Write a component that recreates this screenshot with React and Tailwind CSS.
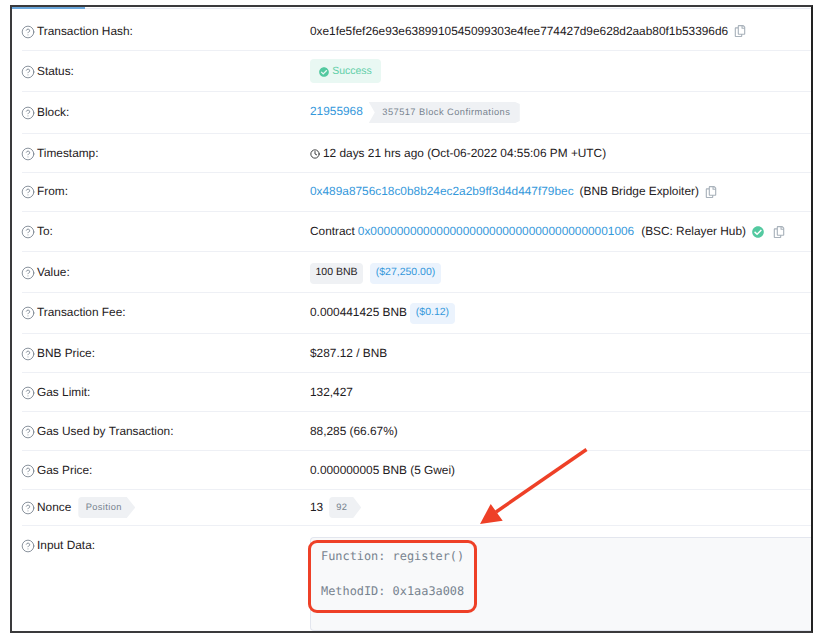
import { CircleHelp, Clock } from 'lucide-react';
import { FaCheckCircle, FaRegCopy } from 'react-icons/fa';

const linkCls = 'text-[#3498db]';

function Row({ label, extra, height, children }) {
  return (
    <div className={`flex items-center border-b border-[#eef0f5] ${height}`}>
      <div className="flex w-[288px] items-center">
        <Help />
        <span>{label}</span>
        {extra}
      </div>
      <div className="flex items-center whitespace-nowrap">{children}</div>
    </div>
  );
}

function Help() {
  return <CircleHelp size={14} strokeWidth={1.4} className="-ml-[1px] mr-[2px] text-[#6f7b87]" />;
}

function CopyIcon({ className }) {
  return <FaRegCopy size={12} className={`text-[#a9b2bb] ${className}`} />;
}

export default function App() {
  return (
    <div className="relative h-[640px] w-[822px] overflow-hidden bg-white font-['Liberation_Sans',sans-serif] text-[11.87px] text-[#1e2022] [text-rendering:geometricPrecision]">
      <div className="ml-[10px] mt-[5px] h-[628px] w-[803px] border-2 border-[#3a3a3c] border-r-[#222]">
        <div className="h-[2px] border-b border-[#e7eaf3]">
          <div className="h-[2px] w-[73px] bg-[#6aa7dc]" />
        </div>
        <div className="ml-[10px]">
          <Row label="Transaction Hash:" height="h-[42px] pt-[4px]">
            <span>0xe1fe5fef26e93e6389910545099303e4fee774427d9e628d2aab80f1b53396d6</span>
            <CopyIcon className="ml-[6px] -mt-[1px]" />
          </Row>
          <Row label="Status:" height="h-[41px] pt-[2px]">
            <span className="-mt-[2px] flex h-[24px] w-[71px] items-center justify-center gap-[3px] rounded-[4px] bg-[#e9f8f3] pt-[1px] text-[10.5px] text-[#63cfa9]">
              <FaCheckCircle size={10} className="text-[#53c9a0]" />
              Success
            </span>
          </Row>
          <Row label="Block:" height="h-[42px]">
            <span className={`-mt-[1px] ${linkCls}`}>21955968</span>
            <span className="ml-[6px] flex h-[21px] w-[151px] items-center justify-center bg-[#eff1f4] pl-[4px] text-[9.3px] tracking-[0.45px] text-[#77838f] [clip-path:polygon(0_0,97%_0,100%_10%,100%_90%,97%_100%,0_100%,6px_50%)]">
              357517 Block Confirmations
            </span>
          </Row>
          <Row label="Timestamp:" height="h-[39px] pt-[2px]">
            <Clock size={10} strokeWidth={2} className="mr-[3px]" />
            <span>12 days 21 hrs ago (Oct-06-2022 04:55:06 PM +UTC)</span>
          </Row>
          <Row label="From:" height="h-[39px]">
            <span className={linkCls}>0x489a8756c18c0b8b24ec2a2b9ff3d4d447f79bec</span>
            <span className="ml-[6px]">(BNB Bridge Exploiter)</span>
            <CopyIcon className="ml-[6px]" />
          </Row>
          <Row label="To:" height="h-[40px]">
            <span>Contract</span>
            <span className={`ml-[3px] ${linkCls}`}>0x0000000000000000000000000000000000001006</span>
            <span className="ml-[7px]">(BSC: Relayer Hub)</span>
            <FaCheckCircle size={12} className="ml-[6px] text-[#53c9a0]" />
            <CopyIcon className="ml-[9px]" />
          </Row>
          <Row label="Value:" height="h-[41px] pt-[2px]">
            <span className="flex h-[21px] w-[53px] items-center justify-center rounded-[4px] bg-[#eff1f4] text-[10.5px]">100 BNB</span>
            <span className={`ml-[7px] flex h-[21px] w-[71px] items-center justify-center rounded-[4px] bg-[#ebf3fd] text-[10.5px] ${linkCls}`}>($27,250.00)</span>
          </Row>
          <Row label="Transaction Fee:" height="h-[41px]">
            <span className="-mt-[1px]">0.000441425 BNB</span>
            <span className={`ml-[3px] flex h-[21px] w-[45px] items-center justify-center rounded-[4px] bg-[#ebf3fd] text-[10.5px] ${linkCls}`}>($0.12)</span>
          </Row>
          <Row label="BNB Price:" height="h-[39px] pt-[2px]">
            <span>$287.12 / BNB</span>
          </Row>
          <Row label="Gas Limit:" height="h-[39px] pt-[2px]">
            <span>132,427</span>
          </Row>
          <Row label="Gas Used by Transaction:" height="h-[39px] pt-[2px]">
            <span>88,285 (66.67%)</span>
          </Row>
          <Row label="Gas Price:" height="h-[39px] pt-[2px]">
            <span>0.000000005 BNB (5 Gwei)</span>
          </Row>
          <Row
            label="Nonce"
            height="h-[36px]"
            extra={
              <span className="ml-[7px] flex h-[21px] w-[57px] items-center justify-center rounded-l-[4px] bg-[#eff1f4] pr-[6px] text-[9.3px] tracking-[0.4px] text-[#77838f] [clip-path:polygon(0_0,85%_0,100%_50%,85%_100%,0_100%)]">
                Position
              </span>
            }
          >
            <span>13</span>
            <span className="ml-[6px] flex h-[21px] w-[32px] items-center justify-center rounded-l-[4px] bg-[#eff1f4] pr-[7px] text-[9.3px] tracking-[0.4px] text-[#77838f] [clip-path:polygon(0_0,75%_0,100%_50%,75%_100%,0_100%)]">
              92
            </span>
          </Row>
          <div className="flex">
            <div className="flex h-fit w-[288px] items-center pt-[11px]">
              <Help />
              <span>Input Data:</span>
            </div>
            <div className="mt-[11px] h-[94px] flex-1 rounded-l-[4px] border border-r-0 border-[#e3e6ee] bg-[#f8f9fa] pl-[10px] pt-[10px] font-['DejaVu_Sans_Mono',monospace] text-[11.9px] leading-[17.5px] text-[#77838f]">
              <div>Function: register()</div>
              <div className="h-[17.5px]" />
              <div>MethodID: 0x1aa3a008</div>
            </div>
          </div>
        </div>
      </div>

      {/* annotation drawn over the screenshot */}
      <div className="absolute left-[308px] top-[540px] h-[73px] w-[169px] rounded-[9px] border-[3.5px] border-[#ee4027]" />
      <svg className="absolute left-0 top-0" width="822" height="640" fill="none">
        <line x1="586.5" y1="449.5" x2="496" y2="512" stroke="#ee4027" strokeWidth="3.5" />
        <polygon points="480,524 490.7,504 502.7,520.7" fill="#ee4027" />
      </svg>
    </div>
  );
}
